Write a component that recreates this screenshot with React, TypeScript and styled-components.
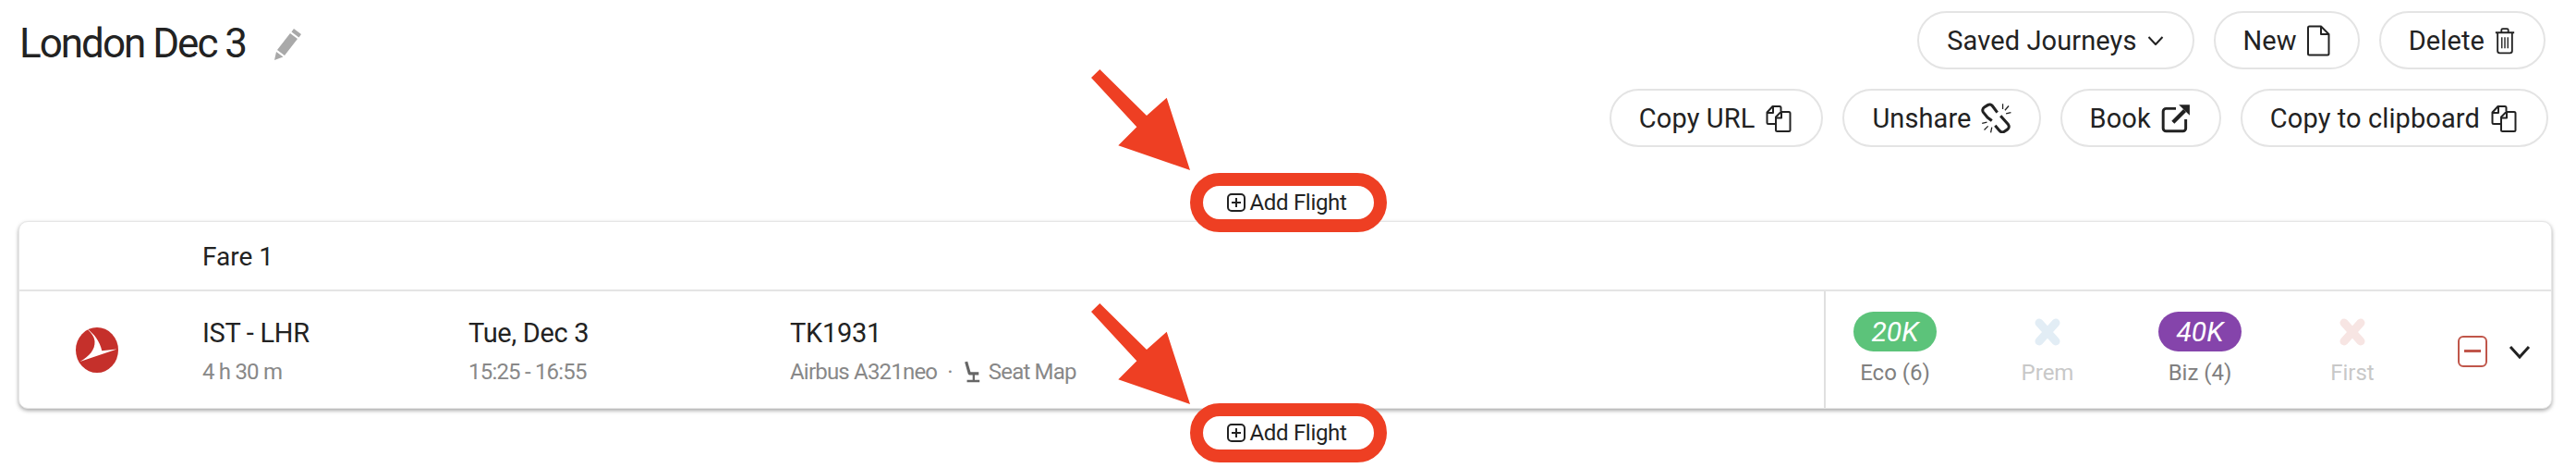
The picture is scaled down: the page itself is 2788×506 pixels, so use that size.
import styled, { createGlobalStyle } from "styled-components";

const GlobalStyle = createGlobalStyle`
  html, body {
    margin: 0;
    background: #fff;
    font-family: Roboto, "Liberation Sans", sans-serif;
    color: #222;
  }
`;

const fares = [
  { name: "Eco (6)", miles: "20K", color: "#5cc37a" },
  { name: "Prem", cross: "#e2edf5" },
  { name: "Biz (4)", miles: "40K", color: "#8544ab" },
  { name: "First", cross: "#f7e5e3" },
];

function CopyIcon() {
  return (
    <Glyph viewBox="0 0 32 32" width="32" height="32">
      <path d="M12 22H5a1.500 1.500 0 0 1-1.500-1.500V9.500L9.500 3H17a1.500 1.500 0 0 1 1.500 1.500V8" />
      <path d="M4 10h6V3.500" />
      <path d="M13 28.500V14.500L18.500 9H27a1.500 1.500 0 0 1 1.500 1.500v18a1.500 1.500 0 0 1-1.500 1.500H14.500a1.500 1.500 0 0 1-1.500-1.500z" />
      <path d="M13.500 15.500H19V9.500" />
    </Glyph>
  );
}

function UnlinkIcon() {
  return (
    <Glyph viewBox="0 0 28 28" width="33" height="33">
      <path d="M15 9L10.500 3a3.200 3.200 0 0 0-4.300-.8L3 4.300a3.200 3.200 0 0 0-.9 4.500L6 13.500l4 3" strokeWidth="2.600" />
      <path d="M18 12l7 8a3.200 3.200 0 0 1-.6 4.500l-3 2a3.200 3.200 0 0 1-4.400-.9L13 21" strokeWidth="2.600" />
      <path d="M20 1v5M25.500 3l-3.500 4M27.500 9L23 10M1 19l4.500-1M3 25l3.500-3.500M9 27.500l1-5" strokeWidth="1.100" />
    </Glyph>
  );
}

function AddIcon() {
  return (
    <Glyph viewBox="0 0 20 20" width="20" height="20">
      <rect x="1" y="1" width="18" height="18" rx="4" />
      <path d="M10 5v10M5 10h10" />
    </Glyph>
  );
}

function AddFlight({ arrowTop }: { arrowTop: number }) {
  return (
    <AddSlot>
      <AddButton>
        <Arrow viewBox="0 0 107 109" width="107" height="109" style={{ top: arrowTop }}>
          <polygon points="0,9 9.300,0 60,50 81.700,30.700 107,109 29.300,82.300 49.300,62.300" />
        </Arrow>
        <AddIcon />
        Add Flight
      </AddButton>
    </AddSlot>
  );
}

export default function App() {
  return (
    <Page>
      <GlobalStyle />
      <Header>
        <TitleWrap>
          <Title>London Dec 3</Title>
          <svg viewBox="0 0 32 38" width="32" height="38">
            <path fill="#a9a9a9" d="M22 3l8 6-2.500 3.500-8-6zM18 8l8 6L12 32 4 26zM3 28l7.500 5.500L1 37z" />
          </svg>
        </TitleWrap>
        <Actions>
          <TopRow>
            <PillButton>
              Saved Journeys
              <Glyph viewBox="0 0 20 16" width="20" height="16">
                <path d="M2.500 4l7.500 8 7.500-8" />
              </Glyph>
            </PillButton>
            <PillButton>
              New
              <Glyph viewBox="0 0 26 34" width="26" height="34">
                <path d="M2 3a1.500 1.500 0 0 1 1.500-1.500H16L24.500 10v21a1.500 1.500 0 0 1-1.500 1.500H3.500A1.500 1.500 0 0 1 2 31z" />
                <path d="M16 2v8h8" />
              </Glyph>
            </PillButton>
            <PillButton>
              Delete
              <Glyph viewBox="0 0 26 32" width="24" height="30">
                <path d="M2 6.500h22M9 6V3.500A1.500 1.500 0 0 1 10.500 2h5A1.500 1.500 0 0 1 17 3.500V6" />
                <path d="M4.500 7v21a2.500 2.500 0 0 0 2.500 2.500h12a2.500 2.500 0 0 0 2.500-2.500V7" />
                <path d="M9.500 12v13M13 12v13M16.500 12v13" strokeWidth="1.500" />
              </Glyph>
            </PillButton>
          </TopRow>
          <ActionRow>
            <PillButton>
              Copy URL
              <CopyIcon />
            </PillButton>
            <PillButton>
              Unshare
              <UnlinkIcon />
            </PillButton>
            <PillButton>
              Book
              <Glyph viewBox="0 0 32 32" width="34" height="34">
                <path d="M16 6H6a3 3 0 0 0-3 3v17a3 3 0 0 0 3 3h17a3 3 0 0 0 3-3v-9" strokeWidth="2.800" />
                <path d="M13 20L25 8" strokeWidth="4" />
                <path d="M19 2h11v11z" fill="#222" stroke="none" />
              </Glyph>
            </PillButton>
            <PillButton>
              Copy to clipboard
              <CopyIcon />
            </PillButton>
          </ActionRow>
        </Actions>
      </Header>

      <AddFlight arrowTop={-126} />

      <Card>
        <FareHead>Fare 1</FareHead>
        <FlightRow>
          <LogoCell>
            <svg viewBox="0 0 46 49" width="46" height="49">
              <ellipse cx="23" cy="24.500" rx="23" ry="24.500" fill="#c5302b" />
              <path
                fill="#fff"
                d="M11.700 1C20 7 26 15 28.300 25.300L44.500 23.500 4.500 37C15 31 21 24 20.500 15 20 9 15.500 5 11.700 1z"
              />
            </svg>
          </LogoCell>
          <InfoCell>
            <Main>IST - LHR</Main>
            <Sub>4 h 30 m</Sub>
          </InfoCell>
          <InfoCell>
            <Main>Tue, Dec 3</Main>
            <Sub>15:25 - 16:55</Sub>
          </InfoCell>
          <InfoCell>
            <Main>TK1931</Main>
            <SubLine>
              Airbus A321neo
              <Dot>·</Dot>
              <Chair viewBox="0 0 22 26" width="20" height="24">
                <path d="M4 1l4 14h11" strokeWidth="3.500" />
                <path d="M13 16v7M5 24h15" strokeWidth="2.500" />
              </Chair>
              Seat Map
            </SubLine>
          </InfoCell>
          <FarePanel>
            {fares.map((fare) => (
              <FareCell key={fare.name}>
                {fare.miles ? (
                  <Badge $color={fare.color!}>{fare.miles}</Badge>
                ) : (
                  <CrossBox>
                    <svg viewBox="0 0 30 30" width="30" height="30">
                      <path d="M6 5l18 20M24 5L6 25" stroke={fare.cross} strokeWidth="9" strokeLinecap="round" />
                    </svg>
                  </CrossBox>
                )}
                <FareLabel $off={!fare.miles}>{fare.name}</FareLabel>
              </FareCell>
            ))}
            <RemoveBox />
            <svg viewBox="0 0 24 16" width="24" height="16">
              <path d="M2 2l10 11L22 2" fill="none" stroke="#222" strokeWidth="3" />
            </svg>
          </FarePanel>
        </FlightRow>
      </Card>

      <AddFlight arrowTop={-122} />
    </Page>
  );
}

const Page = styled.div`
  box-sizing: border-box;
  width: 2788px;
  height: 506px;
  padding: 12px 26px 0 20px;
  overflow: hidden;
`;

const Header = styled.header`
  display: flex;
  justify-content: space-between;
  align-items: flex-start;
  padding-right: 4px;
`;

const TitleWrap = styled.div`
  display: flex;
  align-items: center;
  gap: 30px;
  padding: 11px 0 0 1px;
`;

const Title = styled.h1`
  margin: 0;
  font-size: 44px;
  line-height: 48px;
  font-weight: 400;
  letter-spacing: -2px;
  color: #222;
`;

const Actions = styled.div`
  display: flex;
  flex-direction: column;
  align-items: flex-end;
  gap: 21px;
`;

const ActionRow = styled.div`
  display: flex;
  gap: 21px;
`;

const TopRow = styled(ActionRow)`
  margin-right: 3px;
`;

const PillButton = styled.button`
  display: flex;
  align-items: center;
  gap: 10px;
  box-sizing: border-box;
  height: 63px;
  padding: 0 30px;
  border: 2px solid #e4e4e4;
  border-radius: 32px;
  background: #fff;
  font: 400 29px Roboto, sans-serif;
  letter-spacing: 0.100px;
  color: #222;
`;

const Glyph = styled.svg`
  flex: none;
  fill: none;
  stroke: #222;
  stroke-width: 2;
  stroke-linejoin: round;
`;

const Chair = styled(Glyph)`
  stroke: #666;
`;

const AddSlot = styled.div`
  position: relative;
  z-index: 2;
  display: flex;
  justify-content: center;
  height: 64px;
  margin: 28px 0 -12px;
  padding-left: 6px;

  & ~ & {
    margin: -6px 0 0;
  }
`;

const AddButton = styled.div`
  position: relative;
  display: flex;
  align-items: center;
  justify-content: center;
  gap: 4px;
  box-sizing: border-box;
  width: 213px;
  height: 64px;
  padding-right: 2px;
  border: 14px solid #ee3f23;
  border-radius: 32px;
  background: #fff;
  font-size: 24px;
  letter-spacing: -0.300px;
  color: #222;
`;

const Arrow = styled.svg`
  position: absolute;
  left: -121px;
  fill: #ee3f23;
`;

const Card = styled.section`
  box-sizing: border-box;
  height: 203px;
  border: 1px solid #e6e6e6;
  border-radius: 10px;
  background: #fff;
  box-shadow: 0 2px 4px rgba(0, 0, 0, 0.35);
`;

const FareHead = styled.div`
  box-sizing: border-box;
  height: 75px;
  padding: 20px 0 0 198px;
  font-size: 28px;
  line-height: 36px;
  border-bottom: 2px solid #e4e4e4;
`;

const FlightRow = styled.div`
  display: grid;
  grid-template-columns: 198px 288px 348px 1fr auto;
  height: 126px;
`;

const LogoCell = styled.div`
  padding: 39px 0 0 61px;

  & > svg {
    display: block;
  }
`;

const InfoCell = styled.div`
  display: flex;
  flex-direction: column;
  padding-top: 26px;
`;

const Main = styled.div`
  font-size: 29px;
  line-height: 38px;
  letter-spacing: -0.300px;
  color: #222;
`;

const Sub = styled.div`
  margin-top: 8px;
  font-size: 24px;
  line-height: 30px;
  letter-spacing: -0.800px;
  color: #888;
`;

const SubLine = styled(Sub)`
  display: flex;
  align-items: center;
  gap: 8px;
`;

const Dot = styled.span`
  margin: 0 3px;
`;

const FarePanel = styled.div`
  display: flex;
  align-items: flex-start;
  box-sizing: border-box;
  width: 787px;
  height: 126px;
  padding: 22px 0 0 15px;
  border-left: 2px solid #e0e0e0;
  gap: 45px;

  & > svg {
    margin: 36px 0 0 -22px;
  }
`;

const FareCell = styled.div`
  display: flex;
  flex-direction: column;
  align-items: center;
  width: 120px;
`;

const Badge = styled.div<{ $color: string }>`
  width: 90px;
  height: 43px;
  border-radius: 22px;
  background: ${(p) => p.$color};
  color: #fff;
  font-size: 30px;
  font-style: italic;
  line-height: 43px;
  text-align: center;
`;

const CrossBox = styled.div`
  display: flex;
  align-items: center;
  justify-content: center;
  height: 43px;
`;

const FareLabel = styled.div<{ $off: boolean }>`
  margin-top: 8px;
  font-size: 24px;
  line-height: 30px;
  color: ${(p) => (p.$off ? "#c8c8c8" : "#808080")};
`;

const RemoveBox = styled.div`
  position: relative;
  flex: none;
  box-sizing: border-box;
  width: 32px;
  height: 34px;
  margin: 26px 0 0 9px;
  border: 2px solid #c0564a;
  border-radius: 6px;

  &::after {
    content: "";
    position: absolute;
    left: 5px;
    right: 5px;
    top: 13px;
    height: 3px;
    background: #c0564a;
  }
`;
